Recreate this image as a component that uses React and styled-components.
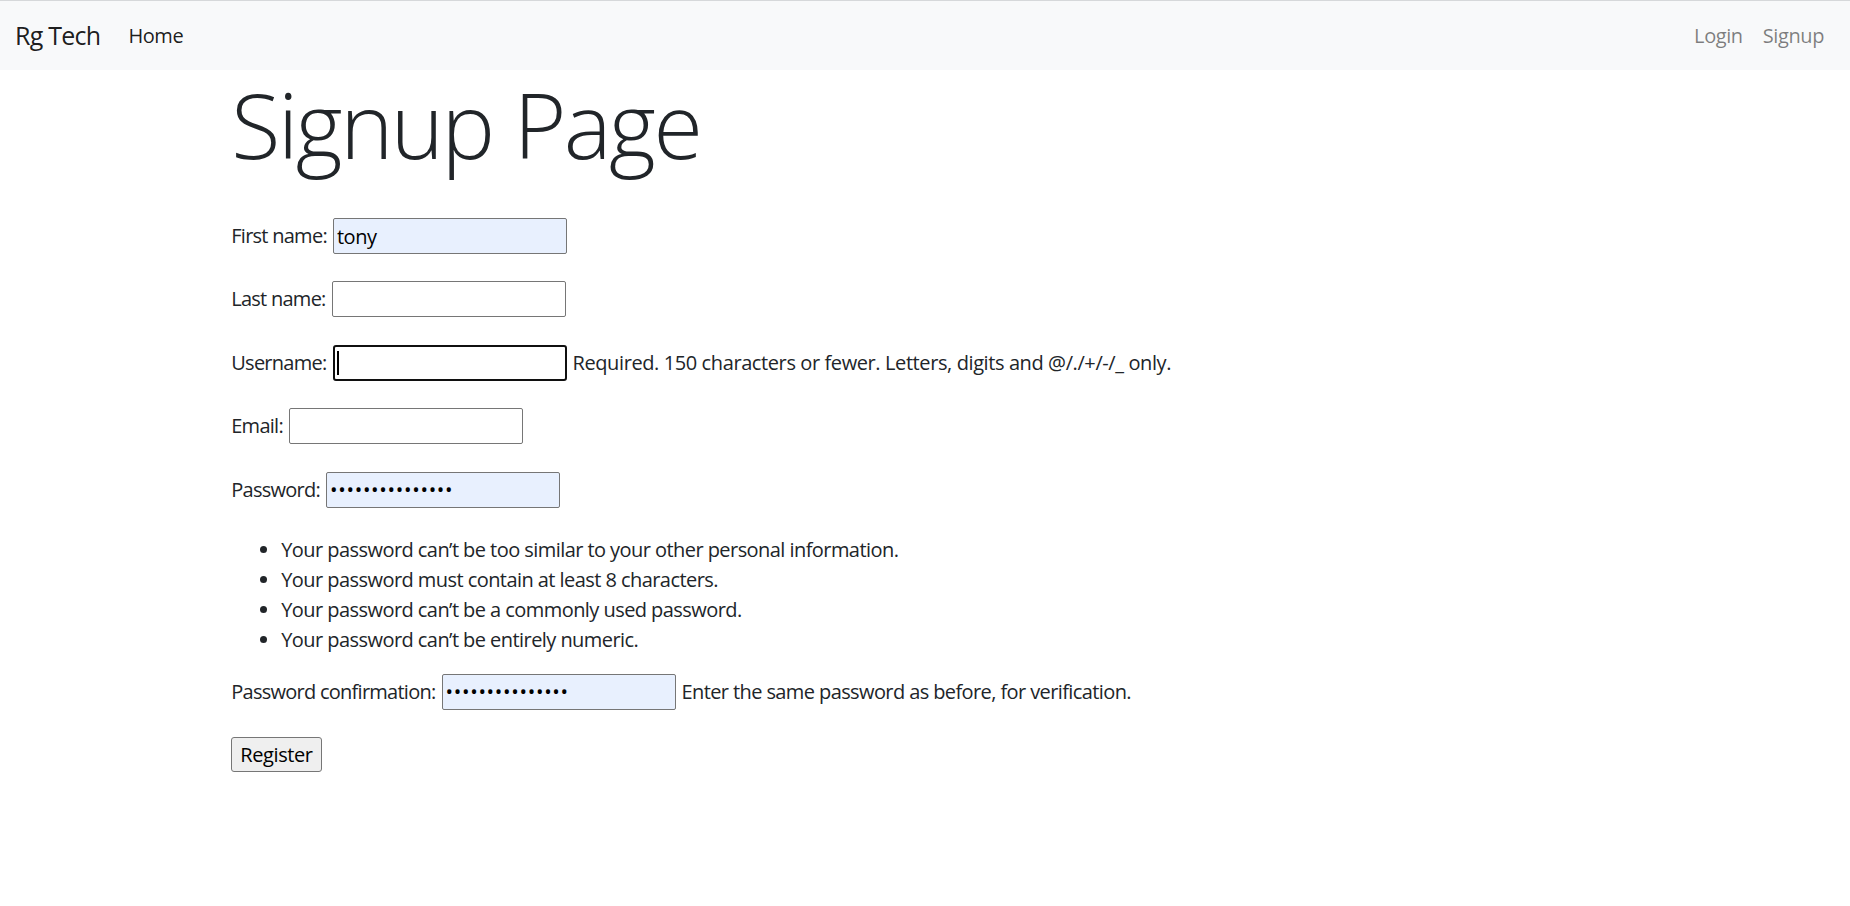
import React from 'react'
import styled, { createGlobalStyle } from 'styled-components'

const GlobalStyle = createGlobalStyle`
  * { box-sizing: border-box; }
  body {
    margin: 0;
    background: #fff;
    color: #212529;
    font-family: "Open Sans", "Noto Sans", sans-serif;
    font-size: 20px;
    line-height: 1.5;
    letter-spacing: -0.02em;
  }
`

const Navbar = styled.nav`
  display: flex;
  align-items: center;
  height: 70px;
  padding: 0 16px 0 15px;
  background: #f8f9fa;
  border-top: 1px solid #d6d8da;
`

const Brand = styled.a`
  font-size: 25px;
  line-height: 1.5;
  color: rgba(0, 0, 0, 0.9);
  text-decoration: none;
  margin-right: 18px;
  margin-top: 1px;
  letter-spacing: -0.03em;
`

const NavList = styled.div`
  display: flex;
  align-items: center;
  margin-left: ${(p) => (p.$right ? 'auto' : '0')};
`

const NavLink = styled.a`
  padding: 0 10px;
  color: ${(p) => (p.$active ? 'rgba(0, 0, 0, 0.9)' : 'rgba(0, 0, 0, 0.5)')};
  text-decoration: none;
  font-size: 20px;
`

const Container = styled.main`
  max-width: 1425px;
  margin: 0 auto;
  padding: 0 18.75px;
`

const Title = styled.h1`
  margin: 0 0 10px;
  font-size: 90px;
  font-weight: 300;
  line-height: 1.2;
  letter-spacing: -0.027em;
`

const Form = styled.form`
  padding-top: 28px;
`

const Row = styled.div`
  display: flex;
  align-items: center;
  gap: 6px;
  height: 40px;
  margin-bottom: ${(p) => (p.$tight ? '22px' : '23.4px')};
`

const Label = styled.label`
  line-height: 30px;
  white-space: nowrap;
  letter-spacing: -0.037em;
`

const Field = styled.span`
  position: relative;
  display: inline-flex;

  &::after {
    content: ${(p) => (p.$caret ? "''" : 'none')};
    position: absolute;
    left: 4px;
    top: 6px;
    width: 2px;
    height: 24px;
    background: #000;
  }
`

const Input = styled.input`
  width: 234px;
  height: 36px;
  padding: 0 3px;
  font-family: inherit;
  font-size: 20px;
  letter-spacing: ${(p) => (p.type === 'password' ? '0.7px' : '-0.02em')};
  color: #000;
  background: ${(p) => (p.$filled ? '#e8f0fe' : '#fff')};
  border: ${(p) => (p.$focused ? '2px solid #101010' : '1px solid #767676')};
  border-radius: ${(p) => (p.$focused ? '3px' : '2px')};
  outline: none;
`

const Help = styled.span`
  line-height: 30px;
  white-space: nowrap;
  letter-spacing: ${(p) => (p.$narrow ? '-0.03em' : '-0.02em')};
`

const Rules = styled.ul`
  margin: 0 0 17px;
  padding: 3px 0 0 50px;
  line-height: 30px;
  letter-spacing: -0.028em;
`

const Button = styled.button`
  height: 35px;
  padding: 0 8px;
  font-family: inherit;
  font-size: 20px;
  letter-spacing: -0.02em;
  color: #000;
  background: #efefef;
  border: 1px solid #767676;
  border-radius: 3px;
`

const rules = [
  'Your password can’t be too similar to your other personal information.',
  'Your password must contain at least 8 characters.',
  'Your password can’t be a commonly used password.',
  'Your password can’t be entirely numeric.',
]

export default function App() {
  return (
    <>
      <GlobalStyle />
      <Navbar>
        <Brand href="#">Rg Tech</Brand>
        <NavList>
          <NavLink href="#" $active>Home</NavLink>
        </NavList>
        <NavList $right>
          <NavLink href="#">Login</NavLink>
          <NavLink href="#">Signup</NavLink>
        </NavList>
      </Navbar>
      <Container>
        <Title>Signup Page</Title>
        <Form onSubmit={(e) => e.preventDefault()}>
          <Row>
            <Label htmlFor="first_name">First name:</Label>
            <Field>
              <Input id="first_name" defaultValue="tony" $filled />
            </Field>
          </Row>
          <Row>
            <Label htmlFor="last_name">Last name:</Label>
            <Field>
              <Input id="last_name" />
            </Field>
          </Row>
          <Row>
            <Label htmlFor="username">Username:</Label>
            <Field $caret>
              <Input id="username" $focused />
            </Field>
            <Help>Required. 150 characters or fewer. Letters, digits and @/./+/-/_ only.</Help>
          </Row>
          <Row>
            <Label htmlFor="email">Email:</Label>
            <Field>
              <Input id="email" type="email" />
            </Field>
          </Row>
          <Row $tight>
            <Label htmlFor="password1">Password:</Label>
            <Field>
              <Input id="password1" type="password" defaultValue="abcdefghijklmno" $filled />
            </Field>
          </Row>
          <Rules>
            {rules.map((r) => (
              <li key={r}>{r}</li>
            ))}
          </Rules>
          <Row>
            <Label htmlFor="password2">Password confirmation:</Label>
            <Field>
              <Input id="password2" type="password" defaultValue="abcdefghijklmno" $filled />
            </Field>
            <Help $narrow>Enter the same password as before, for verification.</Help>
          </Row>
          <Row>
            <Button type="submit">Register</Button>
          </Row>
        </Form>
      </Container>
    </>
  )
}
